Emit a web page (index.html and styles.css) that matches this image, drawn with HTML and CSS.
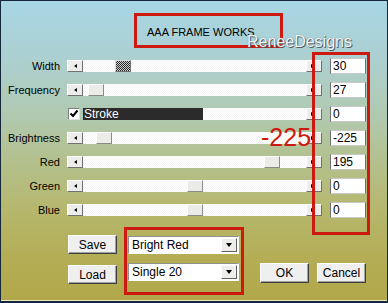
FILE: index.html
```html
<!DOCTYPE html>
<html lang="en">
<head>
  <meta charset="UTF-8" />
  <title>AAA Frame Works</title>
  <link rel="stylesheet" href="styles.css">
</head>
<body>
  <div class="dialog">
    <div class="title">AAA FRAME WORKS</div>

    <div class="rows">
      <div class="row">
        <label>Width</label>
        <div class="scroll">
          <span class="arrow-btn left"></span>
          <div class="track"><span class="thumb focus" style="left:32px"></span></div>
          <span class="arrow-btn right"></span>
        </div>
        <div class="num">30</div>
      </div>

      <div class="row">
        <label>Frequency</label>
        <div class="scroll">
          <span class="arrow-btn left"></span>
          <div class="track"><span class="thumb" style="left:5px"></span></div>
          <span class="arrow-btn right"></span>
        </div>
        <div class="num">27</div>
      </div>

      <div class="row">
        <label></label>
        <div class="scroll">
          <span class="check-cell">
            <span class="check">
              <svg width="10" height="10" viewBox="0 0 10 10"><path d="M1.5 4.5 L4 7 L8.5 1.5" fill="none" stroke="#000" stroke-width="2"/></svg>
            </span>
          </span>
          <span class="stroke-bar">Stroke</span>
          <div class="track"></div>
          <span class="arrow-btn right"></span>
        </div>
        <div class="num">0</div>
      </div>

      <div class="row">
        <label>Brightness</label>
        <div class="scroll">
          <span class="arrow-btn left"></span>
          <div class="track"><span class="thumb" style="left:13px"></span></div>
          <span class="arrow-btn right"></span>
        </div>
        <div class="num">-225</div>
      </div>

      <div class="row">
        <label>Red</label>
        <div class="scroll">
          <span class="arrow-btn left"></span>
          <div class="track"><span class="thumb" style="left:181px"></span></div>
          <span class="arrow-btn right"></span>
        </div>
        <div class="num">195</div>
      </div>

      <div class="row">
        <label>Green</label>
        <div class="scroll">
          <span class="arrow-btn left"></span>
          <div class="track"><span class="thumb" style="left:104px"></span></div>
          <span class="arrow-btn right"></span>
        </div>
        <div class="num">0</div>
      </div>

      <div class="row">
        <label>Blue</label>
        <div class="scroll">
          <span class="arrow-btn left"></span>
          <div class="track"><span class="thumb" style="left:104px"></span></div>
          <span class="arrow-btn right"></span>
        </div>
        <div class="num">0</div>
      </div>
    </div>

    <div class="bottom">
      <div class="io">
        <button class="btn">Save</button>
        <button class="btn">Load</button>
      </div>
      <div class="presets">
        <div class="combo"><span>Bright Red</span><i class="drop"></i></div>
        <div class="combo"><span>Single 20</span><i class="drop"></i></div>
      </div>
      <div class="actions">
        <button class="btn">OK</button>
        <button class="btn">Cancel</button>
      </div>
    </div>

    <!-- annotations drawn over the dialog -->
    <div class="watermark">ReneeDesigns</div>
    <div class="mark-value">-225</div>
    <div class="mark-box"></div>
  </div>
</body>
</html>
```

FILE: styles.css
```css
body {
  margin: 0;
  font-family: "Liberation Sans", Arial, sans-serif;
}
.dialog {
  position: relative;
  width: 388px;
  height: 303px;
  box-sizing: border-box;
  border: 1px solid #14283a;
  border-bottom-width: 2px;
  box-shadow: inset 0 -1px 0 #ebe7c6;
  background: linear-gradient(180deg, #a7d6e5 0%, #acd0d2 18%, #b0c9b0 38%, #b3c190 52%, #b5b76c 70%, #b4ad55 86%, #b2a84a 100%);
  overflow: hidden;
}
.title {
  margin: 12px 0 0 133px;
  width: 149px;
  height: 35px;
  box-sizing: border-box;
  border: 3px solid #cc1a10;
  padding: 3px 0 0 10px;
  font-size: 11px;
  line-height: 26px;
  color: #000;
}
.rows {
  margin-top: 6px;
}
.row {
  display: flex;
  align-items: center;
  height: 24px;
}
.row label {
  width: 59px;
  text-align: right;
  font-size: 11px;
  color: #000;
}
.scroll {
  display: flex;
  width: 255px;
  height: 12px;
  margin-left: 7px;
}
.arrow-btn {
  position: relative;
  width: 16px;
  height: 12px;
  box-sizing: border-box;
  background: #ededeb;
  border: 1px solid;
  border-color: #fff #707070 #707070 #fff;
}
.arrow-btn::after {
  content: "";
  position: absolute;
  top: 3px;
  left: 6px;
  border: 2px solid transparent;
}
.arrow-btn.left::after {
  border-right: 3px solid #000;
  border-left: 0;
}
.arrow-btn.right::after {
  border-left: 3px solid #000;
  border-right: 0;
  left: 4px;
}
.track {
  position: relative;
  flex: 1;
  background: repeating-conic-gradient(#f5f5f5 0 25%, #fff 0 50%) 0 0/2px 2px;
}
.thumb {
  position: absolute;
  top: 0;
  width: 16px;
  height: 12px;
  box-sizing: border-box;
  background: #ebebe8;
  border: 1px solid;
  border-color: #fff #8a8a8a #8a8a8a #fff;
}
.thumb.focus {
  background: repeating-conic-gradient(#2a2a2a 0 25%, #cfcfcf 0 50%) 0 0/2px 2px;
  border-color: #d8d8d8 #707070 #707070 #d8d8d8;
}
.check-cell {
  width: 16px;
  display: flex;
  align-items: center;
}
.check {
  display: flex;
  align-items: center;
  justify-content: center;
  width: 12px;
  height: 12px;
  margin-left: 1px;
  box-sizing: border-box;
  background: #fff;
  border: 1px solid;
  border-color: #808080 #e0e0e0 #e0e0e0 #808080;
}
.stroke-bar {
  width: 120px;
  background: #2b2b2b;
  color: #fff;
  font-size: 12px;
  line-height: 12px;
  padding-left: 1px;
  box-sizing: border-box;
}
.num {
  width: 36px;
  height: 16px;
  margin-left: 8px;
  box-sizing: border-box;
  background: #fff;
  border: 1px solid;
  border-color: #c8c8c8 #6e6e6e #c8c8c8 #6e6e6e;
  padding-left: 2px;
  font-size: 12px;
  line-height: 14px;
  color: #000;
}
.bottom {
  display: flex;
  align-items: flex-start;
  margin-top: 5px;
}
.btn {
  width: 49px;
  height: 19px;
  padding: 0;
  box-sizing: border-box;
  background: #efefef;
  border: 1px solid;
  border-color: #fff #3f3f3f #3f3f3f #fff;
  box-shadow: inset -1px -1px 0 #a0a0a0;
  font-family: "Liberation Sans", Arial, sans-serif;
  font-size: 12px;
  color: #000;
}
.io {
  display: flex;
  flex-direction: column;
  gap: 11px;
  margin-left: 67px;
  padding-top: 8px;
}
.presets {
  display: flex;
  flex-direction: column;
  gap: 9px;
  width: 120px;
  height: 68px;
  margin-left: 7px;
  box-sizing: border-box;
  border: 3px solid #cc1a10;
  padding: 6px 0 0 1px;
}
.combo {
  display: flex;
  align-items: center;
  justify-content: space-between;
  width: 111px;
  height: 18px;
  box-sizing: border-box;
  background: #fff;
  border: 1px solid;
  border-color: #909090 #fff #fff #909090;
  padding: 0 1px 0 3px;
  font-size: 12px;
  color: #000;
}
.drop {
  position: relative;
  width: 16px;
  height: 14px;
  box-sizing: border-box;
  background: #ededeb;
  border: 1px solid;
  border-color: #fff #606060 #606060 #fff;
}
.drop::after {
  content: "";
  position: absolute;
  top: 4px;
  left: 4px;
  border-left: 3px solid transparent;
  border-right: 3px solid transparent;
  border-top: 4px solid #000;
}
.actions {
  display: flex;
  gap: 8px;
  margin-left: 16px;
  padding-top: 36px;
}
.actions .btn {
  height: 20px;
}
.watermark {
  position: absolute;
  left: 246px;
  top: 33px;
  font-size: 16px;
  line-height: 16px;
  color: #f2f5f5;
  text-shadow: 1px 1px 0 #4d5d63, 0 0 1px #6a7a80;
}
.mark-value {
  position: absolute;
  left: 260px;
  top: 124px;
  font-size: 25px;
  line-height: 25px;
  color: #cc1a10;
}
.mark-box {
  position: absolute;
  left: 311px;
  top: 51px;
  width: 58px;
  height: 183px;
  box-sizing: border-box;
  border: 3px solid #cc1a10;
}
```
